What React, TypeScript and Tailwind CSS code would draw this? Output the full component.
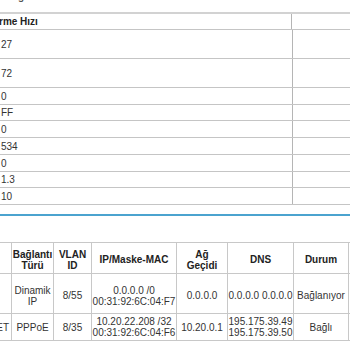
import React from "react";

const topRows: { v: string; h: string }[] = [
  { v: "27", h: "h-[29px]" },
  { v: "72", h: "h-[29px]" },
  { v: "0", h: "h-[17px]" },
  { v: "FF", h: "h-[16px]" },
  { v: "0", h: "h-[17px]" },
  { v: "534", h: "h-[17px]" },
  { v: "0", h: "h-[17px]" },
  { v: "1.3", h: "h-[16px]" },
  { v: "10", h: "h-[17px]" },
];

function Cell({
  children,
  last,
  bold,
  className = "",
}: {
  children?: React.ReactNode;
  last?: boolean;
  bold?: boolean;
  className?: string;
}) {
  return (
    <div
      className={`flex items-center justify-center text-center leading-[11px] border-b border-[#c8c8c8] ${
        last ? "" : "border-r"
      } ${bold ? "font-bold text-[#222] pt-[3px]" : ""} ${className}`}
    >
      {children}
    </div>
  );
}

export default function App() {
  return (
    <div className="w-[350px] h-[350px] overflow-hidden bg-white font-['Liberation_Sans',Arial,sans-serif] text-[10px] text-[#333]">
      <div className="h-[12px] overflow-hidden">
        <div className="ml-[18px] mt-[-8px] leading-[10px] font-bold text-[#555]">g</div>
      </div>
      <div className="border-t-2 border-[#d2d2d2]">
        <div className="flex h-[16px] border-b border-[#c5c5c5]">
          <div className="w-[292px] flex items-center font-bold text-[#222] ml-[-1px]">rme Hızı</div>
          <div className="flex-1 border-l border-[#b5b5b5]" />
        </div>
        {topRows.map((r, i) => (
          <div key={i} className={`flex ${r.h} border-b border-[#c5c5c5]`}>
            <div className="w-[292px] flex items-center pl-[1px]">{r.v}</div>
            <div className="flex-1 border-l border-[#b5b5b5]" />
          </div>
        ))}
      </div>
      <div className="h-[9px]" />
      <div className="border-t-2 border-[#4ba3cf]" />
      <div className="h-[26px]" />
      <div className="border-t border-[#c8c8c8] grid grid-cols-[12px_42px_38px_85px_51px_66px_55px_1fr] grid-rows-[31px_40px_27px]">
        <Cell />
        <Cell bold>
          Bağlantı
          <br />
          Türü
        </Cell>
        <Cell bold>
          VLAN
          <br />
          ID
        </Cell>
        <Cell bold>IP/Maske-MAC</Cell>
        <Cell bold>
          Ağ
          <br />
          Geçidi
        </Cell>
        <Cell bold>DNS</Cell>
        <Cell bold>Durum</Cell>
        <Cell last />

        <Cell />
        <Cell className="pt-[4px]">
          Dinamik
          <br />
          IP
        </Cell>
        <Cell className="pt-[4px]">8/55</Cell>
        <Cell className="pt-[4px]">
          0.0.0.0 /0
          <br />
          00:31:92:6C:04:F7
        </Cell>
        <Cell className="pt-[4px]">0.0.0.0</Cell>
        <Cell className="pt-[4px]">0.0.0.0 0.0.0.0</Cell>
        <Cell className="pt-[4px]">Bağlanıyor</Cell>
        <Cell last />

        <Cell className="!justify-end pr-[2px] whitespace-nowrap">ET</Cell>
        <Cell>PPPoE</Cell>
        <Cell>8/35</Cell>
        <Cell>
          10.20.22.208 /32
          <br />
          00:31:92:6C:04:F6
        </Cell>
        <Cell>10.20.0.1</Cell>
        <Cell>
          195.175.39.49
          <br />
          195.175.39.50
        </Cell>
        <Cell>Bağlı</Cell>
        <Cell last />
      </div>
    </div>
  );
}
